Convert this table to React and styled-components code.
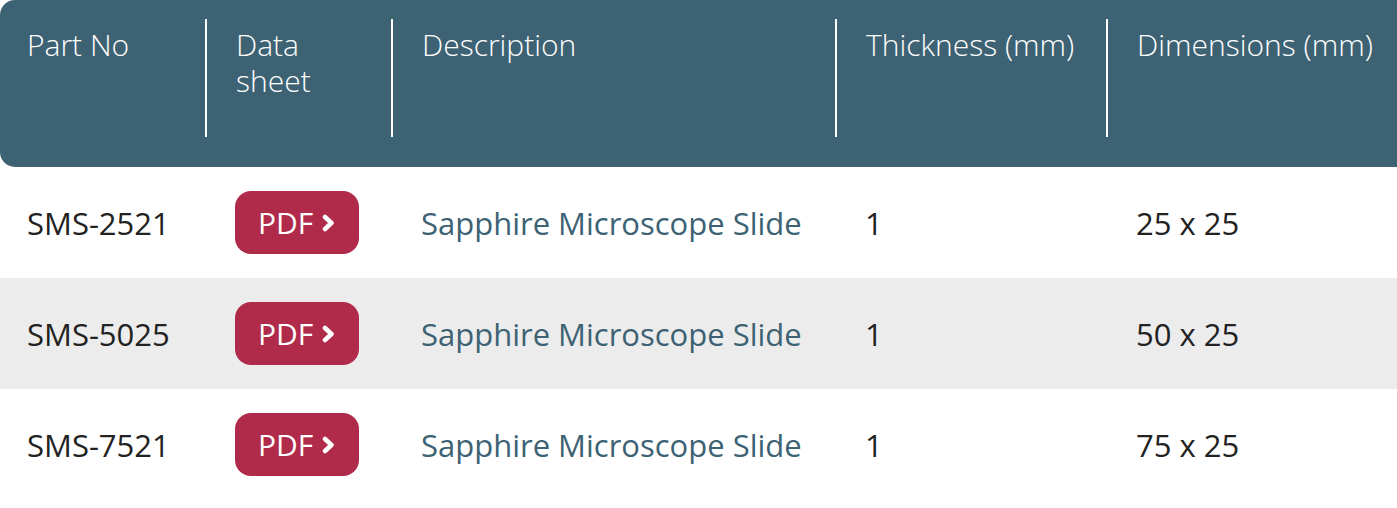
import styled, { createGlobalStyle } from "styled-components";

const GlobalStyle = createGlobalStyle`
  body {
    margin: 0;
    background: #fff;
    font-family: "Open Sans", "Noto Sans", sans-serif;
  }
`;

const columns = "206px 186px 444px 271px 1fr";

const products = [
  { part: "SMS-2521", desc: "Sapphire Microscope Slide", thick: "1", dim: "25 x 25" },
  { part: "SMS-5025", desc: "Sapphire Microscope Slide", thick: "1", dim: "50 x 25" },
  { part: "SMS-7521", desc: "Sapphire Microscope Slide", thick: "1", dim: "75 x 25" },
];

export default function App() {
  return (
    <Table>
      <GlobalStyle />
      <HeadRow>
        <HeadCell $first>Part No</HeadCell>
        <HeadCell>Data<br />sheet</HeadCell>
        <HeadCell>Description</HeadCell>
        <HeadCell>Thickness (mm)</HeadCell>
        <HeadCell>Dimensions (mm)</HeadCell>
      </HeadRow>
      {products.map((p, i) => (
        <Row key={p.part} $striped={i % 2 === 1}>
          <Cell $first>{p.part}</Cell>
          <Cell>
            <PdfButton href="#">
              PDF
              <svg width="13" height="20" viewBox="0 0 13 20">
                <polyline points="3,4 9.5,10 3,16" fill="none" stroke="#fff" strokeWidth="4.5" strokeLinecap="round" strokeLinejoin="round" />
              </svg>
            </PdfButton>
          </Cell>
          <Cell $accent>{p.desc}</Cell>
          <Cell>{p.thick}</Cell>
          <Cell>{p.dim}</Cell>
        </Row>
      ))}
    </Table>
  );
}

const Table = styled.div`
  width: 1397px;
  display: flex;
  flex-direction: column;
`;

const HeadRow = styled.div`
  display: grid;
  grid-template-columns: ${columns};
  height: 167px;
  padding: 19px 0 30px;
  box-sizing: border-box;
  background: #3d6274;
  border-radius: 15px 0 0 15px;
`;

const HeadCell = styled.div`
  border-left: ${(p) => (p.$first ? "none" : "2px solid #fff")};
  margin-left: ${(p) => (p.$first ? "0" : "-1px")};
  padding: 8px 0 0 ${(p) => (p.$first ? "27px" : "29px")};
  color: #fff;
  font-size: 30px;
  font-weight: 300;
  line-height: 36px;
  white-space: nowrap;
`;

const Row = styled.div`
  display: grid;
  grid-template-columns: ${columns};
  height: 111px;
  align-items: center;
  background: ${(p) => (p.$striped ? "#ececec" : "#fff")};
`;

const Cell = styled.div`
  padding-left: ${(p) => (p.$first ? "27px" : "29px")};
  font-size: 31px;
  color: ${(p) => (p.$accent ? "#3d6274" : "#222")};
  white-space: nowrap;
`;

const PdfButton = styled.a`
  display: inline-flex;
  align-items: center;
  gap: 9px;
  width: 124px;
  height: 63px;
  box-sizing: border-box;
  padding-left: 23px;
  background: #b02a4a;
  border-radius: 16px;
  color: #fff;
  font-size: 30px;
  text-decoration: none;
`;
